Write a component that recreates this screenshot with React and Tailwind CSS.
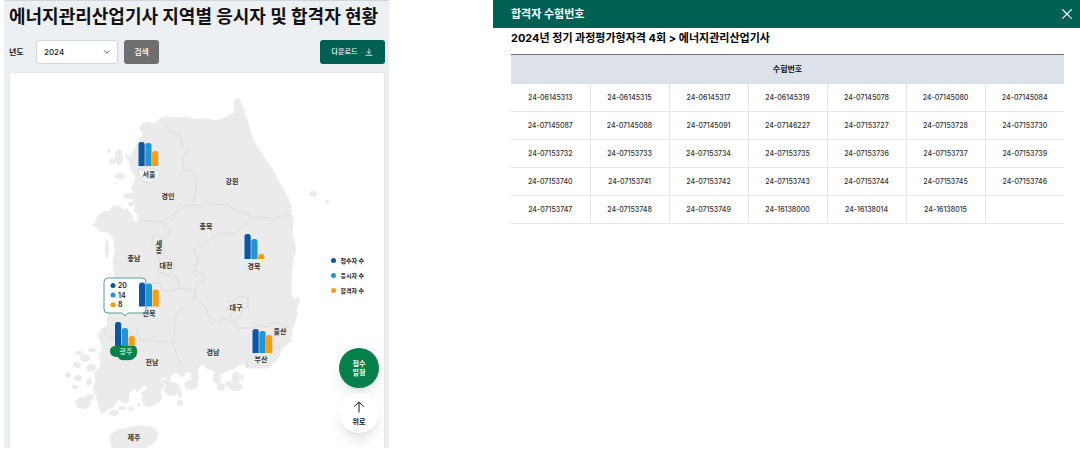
import React, { useState } from 'react';
import { ChevronDown, X } from 'lucide-react';

const regions = [
  { name: '서울', x: 149, y: 177 },
  { name: '경인', x: 168, y: 199 },
  { name: '강원', x: 232, y: 184 },
  { name: '충북', x: 206, y: 229 },
  { name: '세', x: 159, y: 246 },
  { name: '종', x: 159, y: 253 },
  { name: '충남', x: 134, y: 261 },
  { name: '대전', x: 166, y: 268 },
  { name: '경북', x: 254, y: 269 },
  { name: '대구', x: 236, y: 310 },
  { name: '전북', x: 149, y: 316 },
  { name: '울산', x: 280, y: 334 },
  { name: '경남', x: 213, y: 355 },
  { name: '부산', x: 261, y: 362 },
  { name: '전남', x: 152, y: 365 },
  { name: '제주', x: 134, y: 440 },
];

// x, baseline and the three bar heights
const charts = [
  { id: 'seoul', x: 138.5, y: 166, bars: [24, 23, 15] },
  { id: 'gyeongbuk', x: 244.5, y: 259, bars: [25, 20, 5] },
  { id: 'jeonbuk', x: 139, y: 306.5, bars: [24, 23, 17] },
  { id: 'gwangju', x: 115, y: 346, bars: [24, 18, 10] },
  { id: 'busan', x: 252.5, y: 353, bars: [24, 22, 18] },
];

const colors = ['#0b57a4', '#1e96dc', '#fb9d0c'];

const legend = [
  { label: '접수자 수', dot: 'bg-[#0b57a4]' },
  { label: '응시자 수', dot: 'bg-[#1e96dc]' },
  { label: '합격자 수', dot: 'bg-[#fb9d0c]' },
];

const mainland =
  '234,101 236,99 239,99 243,108 248,123 254,142 264,157 273,170 277,179 282,187 291,205 291,212 293,217 292,233 ' +
  '296,250 293,259 292,267 291,280 291,292 293,300 299,297 299,302 296,309 297,315 292,330 291,341 282,349 277,360 ' +
  '267,368 247,368 243,363 237,366 233,370 229,369 224,373 217,374 213,370 207,368 203,364 198,367 198,371 191,373 ' +
  '187,371 182,377 177,372 172,374 169,380 165,377 161,379 164,386 160,392 162,398 156,404 152,402 149,405 147,401 ' +
  '143,396 141,393 148,388 145,384 137,392 134,388 129,393 128,403 122,402 118,399 113,407 108,409 102,414 99,407 ' +
  '97,398 93,388 96,381 95,373 101,365 99,356 103,349 100,340 98,335 102,329 107,326 108,312 113,304 112,291 115,277 ' +
  '113,263 115,250 113,237 107,232 99,231 96,226 92,226 97,221 97,216 105,211 108,212 114,206 119,206 123,210 127,209 ' +
  '132,216 134,222 138,222 138,214 134,211 136,205 131,198 134,192 131,189 136,178 131,170 130,162 126,157 126,154 ' +
  '131,157 135,148 140,138 144,134 140,129 141,125 147,122 151,124 156,123 161,118 167,117 176,118 186,117 196,119 ' +
  '207,119 216,121 227,117 235,112';

const islands = [
  [119, 157, 4, 8], [109, 151, 2, 2], [112, 161, 3, 3], [120, 176, 6, 3], [115, 183, 1, 1],
  [129, 196, 6, 3], [131, 204, 3, 2], [116, 216, 9, 3], [104, 220, 5, 3], [107, 249, 2, 10],
  [313, 194, 4, 3], [327, 202, 2, 2], [92, 350, 4, 2], [79, 353, 4, 2], [85, 358, 5, 4],
  [77, 365, 4, 3], [91, 368, 5, 4], [68, 375, 3, 3], [78, 378, 4, 3], [89, 382, 3, 4],
  [75, 387, 3, 2], [83, 403, 8, 6], [90, 397, 4, 3], [114, 413, 5, 3], [122, 408, 4, 2],
  [131, 409, 3, 2], [139, 405, 2, 2], [149, 399, 7, 8], [172, 389, 8, 7], [180, 403, 3, 3],
  [167, 382, 4, 3], [191, 385, 7, 5], [195, 377, 4, 7], [221, 387, 4, 4], [236, 387, 7, 4],
  [236, 378, 4, 7], [217, 378, 4, 6], [229, 384, 4, 3], [180, 394, 2, 4], [242, 377, 2, 3],
];

const borders = [
  '160,119 167,126 172,133 180,134 182,143 189,150 183,158 183,170 192,170 197,178 196,190 193,205',
  '193,205 203,206 206,202 211,204 220,205 227,204 237,212 244,212 253,218 262,217 273,219 283,216 291,215',
  '193,205 186,206 181,209 176,214 169,216 163,222 156,221 140,221',
  '163,222 166,229 170,233 165,238 161,235 153,235 152,244 157,248 157,255 160,260 158,272 167,275 170,278 175,276 178,281 179,288',
  '165,237 162,243 165,249 163,255 170,260 175,265 172,273 167,275',
  '253,218 243,227 235,233 227,234 220,233 213,237 207,242 197,246 193,250 197,255 198,262 194,270 202,274 205,281 197,285 195,291 188,289 179,288',
  '179,288 172,291 163,291 160,283 150,283 146,287',
  '195,291 193,301 183,307 178,312 174,320 175,332 173,342 177,356 182,366 178,372',
  '195,293 198,301 206,306 208,315 214,320 220,323 224,319 233,322 238,328 253,328 260,325 267,327 272,322 282,324 290,327',
  '225,302 233,301 240,296 248,298 248,307 243,309 240,317 234,321 230,317 233,312 227,308',
  '107,326 104,333 110,338 116,336 119,329 130,331 133,337 138,334 137,328 140,341 151,340 160,342 173,342',
  '247,368 248,360 256,353 267,350 273,348 280,347 274,340 267,337 265,330',
];

const numbers = [
  ['24-06145313', '24-06145315', '24-06145317', '24-06145319', '24-07145078', '24-07145080', '24-07145084'],
  ['24-07145087', '24-07145088', '24-07145091', '24-07146227', '24-07153727', '24-07153728', '24-07153730'],
  ['24-07153732', '24-07153733', '24-07153734', '24-07153735', '24-07153736', '24-07153737', '24-07153739'],
  ['24-07153740', '24-07153741', '24-07153742', '24-07153743', '24-07153744', '24-07153745', '24-07153746'],
  ['24-07153747', '24-07153748', '24-07153749', '24-16138000', '24-16138014', '24-16138015', ''],
];

const barPath = (x, y, h) => {
  const r = Math.min(2.5, h);
  return `M${x} ${y}v${-(h - r)}q0 ${-r} ${r} ${-r}h1.2q${r} 0 ${r} ${r}v${h - r}z`;
};

const KoreaMap = () => (
  <svg viewBox="10 73 374 375" className="block w-full" role="img" aria-label="지역별 현황">
    <g fill="#ebebec" stroke="#ebebec" strokeWidth="1" strokeLinejoin="round">
      <polygon points={mainland} />
      <path d="M110 437q3 -8 15 -8q14 -5 25 -2q8 3 8 9q-3 8 -12 11q-13 4 -28 6q-8 -4 -8 -16z" />
    </g>
    <g fill="#ebebec">
      {islands.map(([cx, cy, rx, ry]) => (
        <ellipse key={`${cx}-${cy}`} cx={cx} cy={cy} rx={rx} ry={ry} />
      ))}
    </g>

    <g fill="none" stroke="#d6dadc" strokeWidth="0.8" strokeLinejoin="round">
      {borders.map((points) => (
        <polyline key={points} points={points} />
      ))}
      <path fill="#f4f4f5" d="M138 169l4 1 5 -3 5 2 5 0 3 6 -3 5 -7 3 -7 -2 -4 -6z" />
    </g>

    <path fill="#05804a" d="M110 351q0 -5 6 -5q5 -2 10 0l6 -1q6 1 5 7q0 5 -3 6q-2 3 -9 2q-5 1 -7 -3q-8 0 -8 -6z" />

    <g
      fill="#333"
      textAnchor="middle"
      className="font-['Inter','Noto_Sans_CJK_KR',sans-serif] text-[7px] font-bold"
    >
      {regions.map((r) => (
        <text key={r.name} x={r.x} y={r.y}>{r.name}</text>
      ))}
      <text x="126" y="354" fill="#a9dcb9">광주</text>
    </g>

    <path
      fill="#fff"
      stroke="#5b9e97"
      strokeWidth="1"
      d="M108 278h34q4 0 4 4v27q0 4 -4 4h-14l-3 3 -3 -3h-14q-4 0 -4 -4v-27q0 -4 4 -4z"
    />
    {[20, 14, 8].map((value, i) => (
      <g key={value}>
        <circle cx="113" cy={285.5 + i * 9.6} r="2.5" fill={colors[i]} />
        <text x="118" y={288 + i * 9.6} fill="#222" className="font-['Inter',sans-serif] text-[7px] font-semibold">
          {value}
        </text>
      </g>
    ))}

    {charts.map((chart) => (
      <g key={chart.id}>
        {chart.bars.map((h, i) => (
          <path key={i} fill={colors[i]} d={barPath(chart.x + i * 6.8, chart.y, h)} />
        ))}
      </g>
    ))}
  </svg>
);

const RegionStatus = () => {
  const [year, setYear] = useState('2024');

  return (
    <section className="relative self-start border-t border-gray-300 bg-[#edf0f3] pt-1 pr-1 pl-[5px]">
      <h1 className="text-lg leading-6 font-bold whitespace-nowrap text-[#111]">
        에너지관리산업기사 지역별 응시자 및 합격자 현황
      </h1>

      <div className="mt-[11px] flex h-6 items-center">
        <label htmlFor="year" className="w-[27px] text-[8px] font-bold">년도</label>
        <div className="relative flex h-6 w-[82px]">
          <select
            id="year"
            value={year}
            onChange={(e) => setYear(e.target.value)}
            className="h-6 w-full appearance-none rounded-[3px] border border-gray-300 bg-white py-0 pl-[7px] text-[8px] leading-3 font-medium text-[#222]"
          >
            <option>2024</option>
            <option>2023</option>
          </select>
          <ChevronDown className="pointer-events-none absolute top-[7px] right-[6px] h-[10px] w-[10px] text-gray-700" />
        </div>
        <button className="ml-[6px] h-6 w-[35px] rounded-[3px] bg-[#6d6e70] text-[8px] font-medium text-white">
          검색
        </button>
        <button className="ml-auto flex h-6 w-[65px] items-center justify-center gap-2 rounded-[3px] bg-[#006054] text-[7px] font-medium text-white">
          다운로드
          <svg viewBox="0 0 8 8" className="h-2 w-2" fill="none" stroke="currentColor" strokeWidth="0.8" aria-hidden="true">
            <path d="M4 0.5v5M1.8 3.4l2.2 2.1 2.2 -2.1M0.5 7.3h7" />
          </svg>
        </button>
      </div>

      <div className="relative mt-2 overflow-hidden rounded-t-[3px] border border-b-0 border-gray-200 bg-white">
        <KoreaMap />
        <ul className="absolute top-[182px] right-5 flex flex-col gap-[5px]">
          {legend.map((item) => (
            <li key={item.label} className="flex h-[10px] items-center gap-1 text-[6px] font-bold text-[#222]">
              <span className={`h-[5px] w-[5px] rounded-full ${item.dot}`} />
              {item.label}
            </li>
          ))}
        </ul>
      </div>

      <div className="absolute right-[10px] bottom-[15px] flex flex-col gap-[5px] text-[7px] leading-[9px] font-bold">
        <button className="h-10 w-10 rounded-full bg-[#05804a] text-white shadow-lg">
          접수<br />일정
        </button>
        <button className="flex h-10 w-10 flex-col items-center justify-center gap-1 rounded-full bg-white text-[#111] shadow-lg">
          <svg viewBox="0 0 12 12" className="h-3 w-3" fill="none" stroke="currentColor" strokeWidth="1" aria-hidden="true">
            <path d="M6 11.5V1M1.2 5.6L6 1l4.8 4.6" />
          </svg>
          위로
        </button>
      </div>
    </section>
  );
};

const PassedNumbers = () => (
  <section>
    <header className="flex h-7 items-center justify-between bg-[#006054] pr-1 pl-[18px] text-white">
      <h2 className="text-[11px] leading-4 font-bold">합격자 수험번호</h2>
      <button aria-label="닫기">
        <X className="h-[18px] w-[18px]" strokeWidth={1.5} />
      </button>
    </header>
    <div className="pr-4 pl-[18px]">
      <h3 className="pt-[2px] pb-2 text-[11px] leading-4 font-bold text-black">
        2024년 정기 과정평가형자격 4회 &gt; 에너지관리산업기사
      </h3>
      <table className="w-full table-fixed border-collapse text-center">
        <thead>
          <tr className="h-[29px] border-t border-gray-500 bg-[#dce1ea]">
            <th colSpan={7} scope="colgroup" className="p-0 text-[8px] font-bold text-[#111]">수험번호</th>
          </tr>
        </thead>
        <tbody>
          {numbers.map((row) => (
            <tr key={row[0]} className="h-7 border-b border-gray-200">
              {row.map((no, i) => (
                <td key={i} className="border-r border-gray-200 p-0 pt-px text-[7px] font-medium text-[#333] last:border-r-0">
                  {no}
                </td>
              ))}
            </tr>
          ))}
        </tbody>
      </table>
    </div>
  </section>
);

const App = () => (
  <main className="grid grid-cols-[385fr_587fr] gap-x-[104px] bg-white pl-1 font-['Inter','Noto_Sans_CJK_KR',sans-serif] text-[#222]">
    <RegionStatus />
    <PassedNumbers />
  </main>
);

export default App;
